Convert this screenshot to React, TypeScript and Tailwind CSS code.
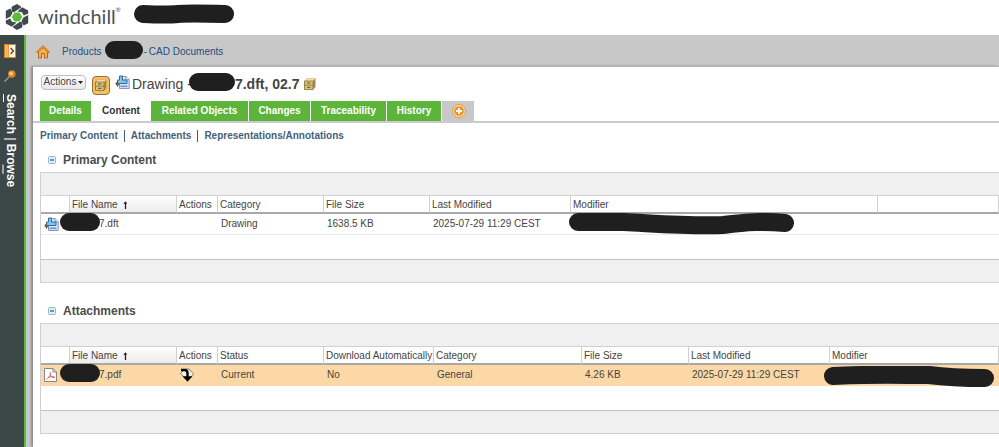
import React from 'react';

const INK = '#1f1f1f';

const LogoIcon: React.FC = () => (
  <svg className="w-6 h-[26px] shrink-0" viewBox="0 0 24 26" fill="#3f4a4c">
    <path d="M12 0 L16 2.4 L16 3.4 L9 8.2 L6.6 7.6 L6.6 2.8 Z" />
    <path d="M17.2 3.2 L23.2 6.6 L23.2 9.4 L18.8 11.4 L17 8.2 L12.4 7.6 Z" />
    <path d="M23.2 11 L23.2 19.2 L18.6 21.4 L16.4 17.2 L18.4 13.4 Z" />
    <path d="M12 26 L8 23.6 L8 22.6 L15 17.8 L17.4 18.4 L17.4 23.2 Z" />
    <path d="M6.8 22.8 L0.8 19.4 L0.8 16.6 L5.2 14.6 L7 17.8 L11.6 18.4 Z" />
    <path d="M0.8 15 L0.8 6.8 L5.4 4.6 L7.6 8.8 L5.6 12.6 Z" />
    <path d="M9.4 8.6 L14.6 8.6 L17.2 13 L14.6 17.4 L9.4 17.4 L6.8 13 Z" fill="#5cbb3c" />
  </svg>
);

const PanelIcon: React.FC = () => (
  <svg className="w-3 h-[14px]" viewBox="0 0 12 14">
    <rect width="12" height="14" fill="#d98324" />
    <rect x="1" y="1" width="3.5" height="12" fill="#f6b660" />
    <rect x="5" y="1" width="6" height="12" fill="#fff6e6" />
    <path d="M6.6 4 L9.4 7 L6.6 10" fill="none" stroke="#6b4a22" strokeWidth="1.5" />
  </svg>
);

const PinIcon: React.FC = () => (
  <svg className="w-3 h-3" viewBox="0 0 12 12">
    <path d="M0.5 11.5 L5.5 6.5" stroke="#9aa1a1" strokeWidth="1.3" />
    <circle cx="7.8" cy="4" r="3.8" fill="#d98324" />
    <circle cx="7.2" cy="3.4" r="2" fill="#f9c274" />
  </svg>
);

const HomeIcon: React.FC = () => (
  <svg className="w-[14px] h-[14px]" viewBox="0 0 14 14">
    <path d="M2.5 6.5 V13 H5.5 V8.5 H8.5 V13 H11.5 V6.5 L7 2.5 Z" fill="#f9b34c" stroke="#b5651d" />
    <path d="M0.8 7.6 L7 1.6 L13.2 7.6" fill="none" stroke="#c4691a" strokeWidth="2" />
    <path d="M1.4 7.2 L7 1.8 L12.6 7.2" fill="none" stroke="#fba53a" />
  </svg>
);

const CabinetIcon: React.FC = () => (
  <svg className="w-3 h-3" viewBox="0 0 12 12">
    <path d="M0.5 3 L3 0.5 H11.5 V9 L9 11.5 H0.5 Z" fill="#a88a4a" />
    <path d="M1 3 L3 0.8 H11 L9 3 Z" fill="#f1e2a6" />
    <path d="M0.5 3 H9 V11.5 H0.5 Z" fill="#dcc57c" stroke="#84733f" strokeWidth="0.8" />
    <path d="M0.5 7.2 H9" stroke="#84733f" strokeWidth="0.8" />
    <path d="M3 5 H6.5 M3 9.3 H6.5" stroke="#5d5230" />
  </svg>
);

const DraftIcon: React.FC = () => (
  <svg className="w-[15px] h-[15px] shrink-0" viewBox="0 0 15 15">
    <path d="M4.5 1.5 H11 L14.2 4.5 V13.5 H4.5 Z" fill="#d9e6f8" stroke="#8396c4" />
    <path d="M11 1.5 V4.7 H14.2" fill="#fff" stroke="#8396c4" />
    <path d="M4.5 1 H7.5 V5 H12 V8.5 H2.5 V5 H4.5 Z" fill="#7cc4ea" stroke="#2d6f9f" />
    <path d="M5.5 11.3 H12.5" stroke="#6c93cc" strokeWidth="1.6" />
    <path d="M0.3 8.5 L3 6 V12.4 Z" fill="#5c4a36" />
    <path d="M2 9.5 H4.5" stroke="#8a6a3c" strokeWidth="2" />
  </svg>
);

const PdfIcon: React.FC = () => (
  <svg className="w-[13px] h-[14px]" viewBox="0 0 13 14">
    <path d="M0.5 0.5 H9 L12.5 4 V13.5 H0.5 Z" fill="#fdfdfd" stroke="#858585" />
    <path d="M9 0.5 V4 H12.5" fill="none" stroke="#858585" />
    <path d="M6 4 C7 6.5 6 8.5 2.5 11.3 M6.2 6 C7 8.5 8.5 9.6 11 9.4 M4.2 9.4 C6 8.6 8 8.6 11 9.4" fill="none" stroke="#e5585c" />
  </svg>
);

const DownloadIcon: React.FC = () => (
  <svg className="w-[14px] h-[14px]" viewBox="0 0 14 14">
    <path d="M0.6 5.5 L5 1 L9 1 L13.6 6 L10 10 L5 10 Z" fill="#f1f4ec" stroke="#6f6f6f" strokeWidth="0.9" />
    <path d="M1 2 H4.5 Q7.5 2.2 7.5 5 V9" fill="none" stroke="#000" strokeWidth="2.4" />
    <path d="M2.5 8.3 H12.5 L7.5 13.8 Z" fill="#000" />
  </svg>
);

const AddIcon: React.FC = () => (
  <svg className="w-[14px] h-[14px]" viewBox="0 0 14 14">
    <circle cx="7" cy="7" r="6.5" fill="#fbdcae" stroke="#e69a45" />
    <circle cx="7" cy="7" r="4.8" fill="#f29226" />
    <path d="M7 4 V10 M4 7 H10" stroke="#fff" strokeWidth="2" />
  </svg>
);

const CollapseIcon: React.FC = () => (
  <svg className="w-2 h-2" viewBox="0 0 8 8">
    <rect x="0.5" y="0.5" width="7" height="7" rx="1" fill="#dcedf6" stroke="#8fbcd3" />
    <path d="M2 4 H6" stroke="#2b5f7d" strokeWidth="1.2" />
  </svg>
);

const SortIcon: React.FC = () => (
  <svg className="w-[5px] h-2" viewBox="0 0 5 8">
    <path d="M2.5 8 V1" fill="none" stroke="#222" strokeWidth="1.3" />
    <path d="M0.3 3 L2.5 0.3 L4.2 2.6 Z" fill="#222" />
  </svg>
);

const tabs = [
  { label: 'Details', width: 'w-[51px]' },
  { label: 'Content', width: 'w-[58px]', active: true },
  { label: 'Related Objects', width: 'w-[97px]' },
  { label: 'Changes', width: 'w-[61px]' },
  { label: 'Traceability', width: 'w-[75px]' },
  { label: 'History', width: 'w-[54px]' },
];

interface Column {
  label: string;
  width: string;
}

interface FileTableProps {
  title: string;
  columns: Column[];
  cells: React.ReactNode[];
  selected?: boolean;
}

const FileTable: React.FC<FileTableProps> = ({ title, columns, cells, selected }) => (
  <section>
    <div className="flex items-center h-6 pl-2">
      <button className="w-2 h-2" aria-label={`Collapse ${title}`}>
        <CollapseIcon />
      </button>
      <h2 className="ml-[7px] text-[12px] leading-4 font-bold text-[#4d4d4d]">{title}</h2>
    </div>
    <div className="border border-r-0 border-[#d0d0d0]">
      <div className="h-[22px] bg-[#f0f0f0]" />
      <table className="w-full table-fixed border-separate border-spacing-0 text-left text-[10px] leading-4 text-[#444]">
        <colgroup>
          {columns.map((column, index) => (
            <col key={index} className={column.width} />
          ))}
        </colgroup>
        <thead>
          <tr>
            {columns.map((column, index) => (
              <th
                key={index}
                className={`h-[19px] p-0 pl-[2px] pt-px border-t border-r border-b-2 border-t-[#d0d0d0] border-r-[#d0d0d0] border-b-[#a8a8a8] leading-[15px] font-normal whitespace-nowrap ${column.label === 'File Name' ? 'bg-linear-to-b from-white to-[#ececec]' : 'bg-white'}`}
              >
                {column.label === 'File Name' ? (
                  <span className="flex items-center gap-[5px]">
                    {column.label}
                    <SortIcon />
                  </span>
                ) : (
                  column.label
                )}
              </th>
            ))}
          </tr>
        </thead>
        <tbody>
          <tr className={selected ? 'bg-[#fbd8a5]' : 'bg-white'}>
            {cells.map((cell, index) => (
              <td
                key={index}
                className={`relative h-[21px] p-0 pl-[3px] border-b whitespace-nowrap ${selected ? 'border-[#fbd8a5]' : 'border-[#e8e8e8]'}`}
              >
                {cell}
              </td>
            ))}
          </tr>
        </tbody>
      </table>
      <div className="h-6 bg-white" />
      <div className="h-[23px] border-t border-[#c4c4c4] bg-[#f0f0f0]" />
    </div>
  </section>
);

const primaryColumns: Column[] = [
  { label: '', width: 'w-[29px]' },
  { label: 'File Name', width: 'w-[107px]' },
  { label: 'Actions', width: 'w-[41px]' },
  { label: 'Category', width: 'w-[106px]' },
  { label: 'File Size', width: 'w-[106px]' },
  { label: 'Last Modified', width: 'w-[141px]' },
  { label: 'Modifier', width: 'w-[307px]' },
  { label: '', width: 'w-auto' },
];

const attachmentColumns: Column[] = [
  { label: '', width: 'w-[29px]' },
  { label: 'File Name', width: 'w-[107px]' },
  { label: 'Actions', width: 'w-[41px]' },
  { label: 'Status', width: 'w-[106px]' },
  { label: 'Download Automatically', width: 'w-[110px]' },
  { label: 'Category', width: 'w-[148px]' },
  { label: 'File Size', width: 'w-[107px]' },
  { label: 'Last Modified', width: 'w-[141px]' },
  { label: 'Modifier', width: 'w-auto' },
];

const HiddenName: React.FC<{ suffix: string }> = ({ suffix }) => (
  <span className="block pl-[26px]">
    <span className="absolute -left-[10px] -top-px w-10 h-[18px] rounded-full bg-[#1f1f1f]" />
    {suffix}
  </span>
);

const App: React.FC = () => {
  return (
    <div className="min-h-screen flex flex-col bg-white font-['Liberation_Sans',Arial,sans-serif] text-[#444]">
      {/* Top bar */}
      <header className="flex items-start h-[35px] pl-[5px] pt-1">
        <LogoIcon />
        <span className="flex ml-[9px] w-[86px] font-[Lato,sans-serif] text-[20px] leading-6 text-[#4a5355]">
          windchill<span className="text-[6px] leading-3">®</span>
        </span>
        <svg className="ml-[9px] w-[102px] h-5" viewBox="0 0 102 20">
          <path d="M10 10 Q35 11 45 10 T92 10" fill="none" stroke={INK} strokeWidth="18" strokeLinecap="round" />
        </svg>
      </header>

      <div className="flex flex-1">
        {/* Collapsed side panel */}
        <aside className="w-[26px] shrink-0 flex flex-col items-center pt-[9px] pr-1 bg-[#3c4747] border-r-2 border-[#5cbb3c]">
          <button aria-label="Expand panel">
            <PanelIcon />
          </button>
          <span className="mt-3">
            <PinIcon />
          </span>
          <span className="mt-3 ml-[2px] [writing-mode:vertical-rl] text-[12px] leading-4 font-bold text-white whitespace-nowrap">
            <u>S</u>earch <span className="font-normal">|</span> Bro<u>w</u>se
          </span>
        </aside>

        <div className="flex-1 min-w-0 flex flex-col bg-[#c8c8c8]">
          <nav className="flex items-center h-[31px] pl-[10px] pt-[2px] text-[10px] leading-4 text-[#1c4f82]">
            <a href="#home" aria-label="Home">
              <HomeIcon />
            </a>
            <a href="#products" className="ml-3">Products</a>
            <span className="w-[38px] h-[18px] -mt-1 ml-1 rounded-full bg-[#1f1f1f]" />
            <span className="mr-[2px]">-</span>
            <a href="#cad">CAD Documents</a>
          </nav>

          <main className="flex-1 ml-[7px] bg-white border-t border-[#b4b4b4] shadow-[-2px_0_2px_#8c8c8c]">
            {/* Title */}
            <div className="flex items-center h-[34px] pl-2">
              <button className="flex items-center justify-center w-[45px] h-[15px] -mt-1 rounded-sm border border-[#bdbdbd] bg-linear-to-b from-white to-[#e8e8e8] text-[10px] leading-3">
                Actions
                <svg className="ml-[2px] w-[5px] h-[3px]" viewBox="0 0 5 3">
                  <path d="M0 0 H5 L2.5 3 Z" fill="#222" />
                </svg>
              </button>
              <button
                aria-label="Cabinet"
                className="flex items-center justify-center w-[18px] h-[19px] ml-[6px] mt-[2px] rounded-sm border border-[#8e7443] bg-[#fac05e]"
              >
                <CabinetIcon />
              </button>
              <span className="ml-[5px] -mt-1">
                <DraftIcon />
              </span>
              <h1 className="flex items-center ml-[2px] text-[14px] leading-4 font-bold whitespace-pre">
                <span className="font-normal">Drawing -</span>
                <span className="w-[46px] h-[18px] -mt-1 -ml-[3px] rounded-full bg-[#1f1f1f]" />
                7.dft, 02.7
              </h1>
              <span className="ml-1">
                <CabinetIcon />
              </span>
            </div>

            {/* Tabs */}
            <div className="flex gap-px h-[22px] pl-[7px] border-b-2 border-[#cbcbcb] text-[10px] leading-5 font-bold text-center">
              {tabs.map((tab) => (
                <button
                  key={tab.label}
                  className={`${tab.width} whitespace-nowrap ${tab.active ? 'bg-white text-[#333]' : 'bg-[#5cb53a] text-white'}`}
                >
                  {tab.label}
                </button>
              ))}
              <button aria-label="Add tab" className="flex items-center justify-center w-8 pl-[2px] bg-[#c8c8c8]">
                <AddIcon />
              </button>
            </div>

            <div className="pl-[7px]">
              <div className="flex items-center h-[25px] text-[10px] leading-4 font-bold text-[#44617b]">
                <a href="#primary">Primary Content</a>
                <span className="w-px h-3 mx-[6px] bg-[#44617b]" />
                <a href="#attachments">Attachments</a>
                <span className="w-px h-3 mx-[6px] bg-[#44617b]" />
                <a href="#representations">Representations/Annotations</a>
              </div>

              <FileTable
                title="Primary Content"
                columns={primaryColumns}
                cells={[
                  <DraftIcon />,
                  <HiddenName suffix="7.dft" />,
                  '',
                  'Drawing',
                  '1638.5 KB',
                  '2025-07-29 11:29 CEST',
                  <svg className="absolute -left-[3px] -top-px w-[226px] h-[22px]" viewBox="0 0 226 22">
                    <path d="M10 9 H56 C96 11 120 13 155 12 C180 9 195 8 217 10" fill="none" stroke={INK} strokeWidth="18" strokeLinecap="round" />
                  </svg>,
                  '',
                ]}
              />

              <div className="h-4" />

              <FileTable
                title="Attachments"
                columns={attachmentColumns}
                selected
                cells={[
                  <PdfIcon />,
                  <HiddenName suffix="7.pdf" />,
                  <DownloadIcon />,
                  'Current',
                  'No',
                  'General',
                  '4.26 KB',
                  '2025-07-29 11:29 CEST',
                  <svg className="absolute -left-[6px] top-px w-[171px] h-[22px]" viewBox="0 0 171 22">
                    <path d="M9 10 C40 8 80 9 105 9 C120 11 135 12 161 12" fill="none" stroke={INK} strokeWidth="18" strokeLinecap="round" />
                  </svg>,
                ]}
              />
            </div>
          </main>
        </div>
      </div>
    </div>
  );
};

export default App;
